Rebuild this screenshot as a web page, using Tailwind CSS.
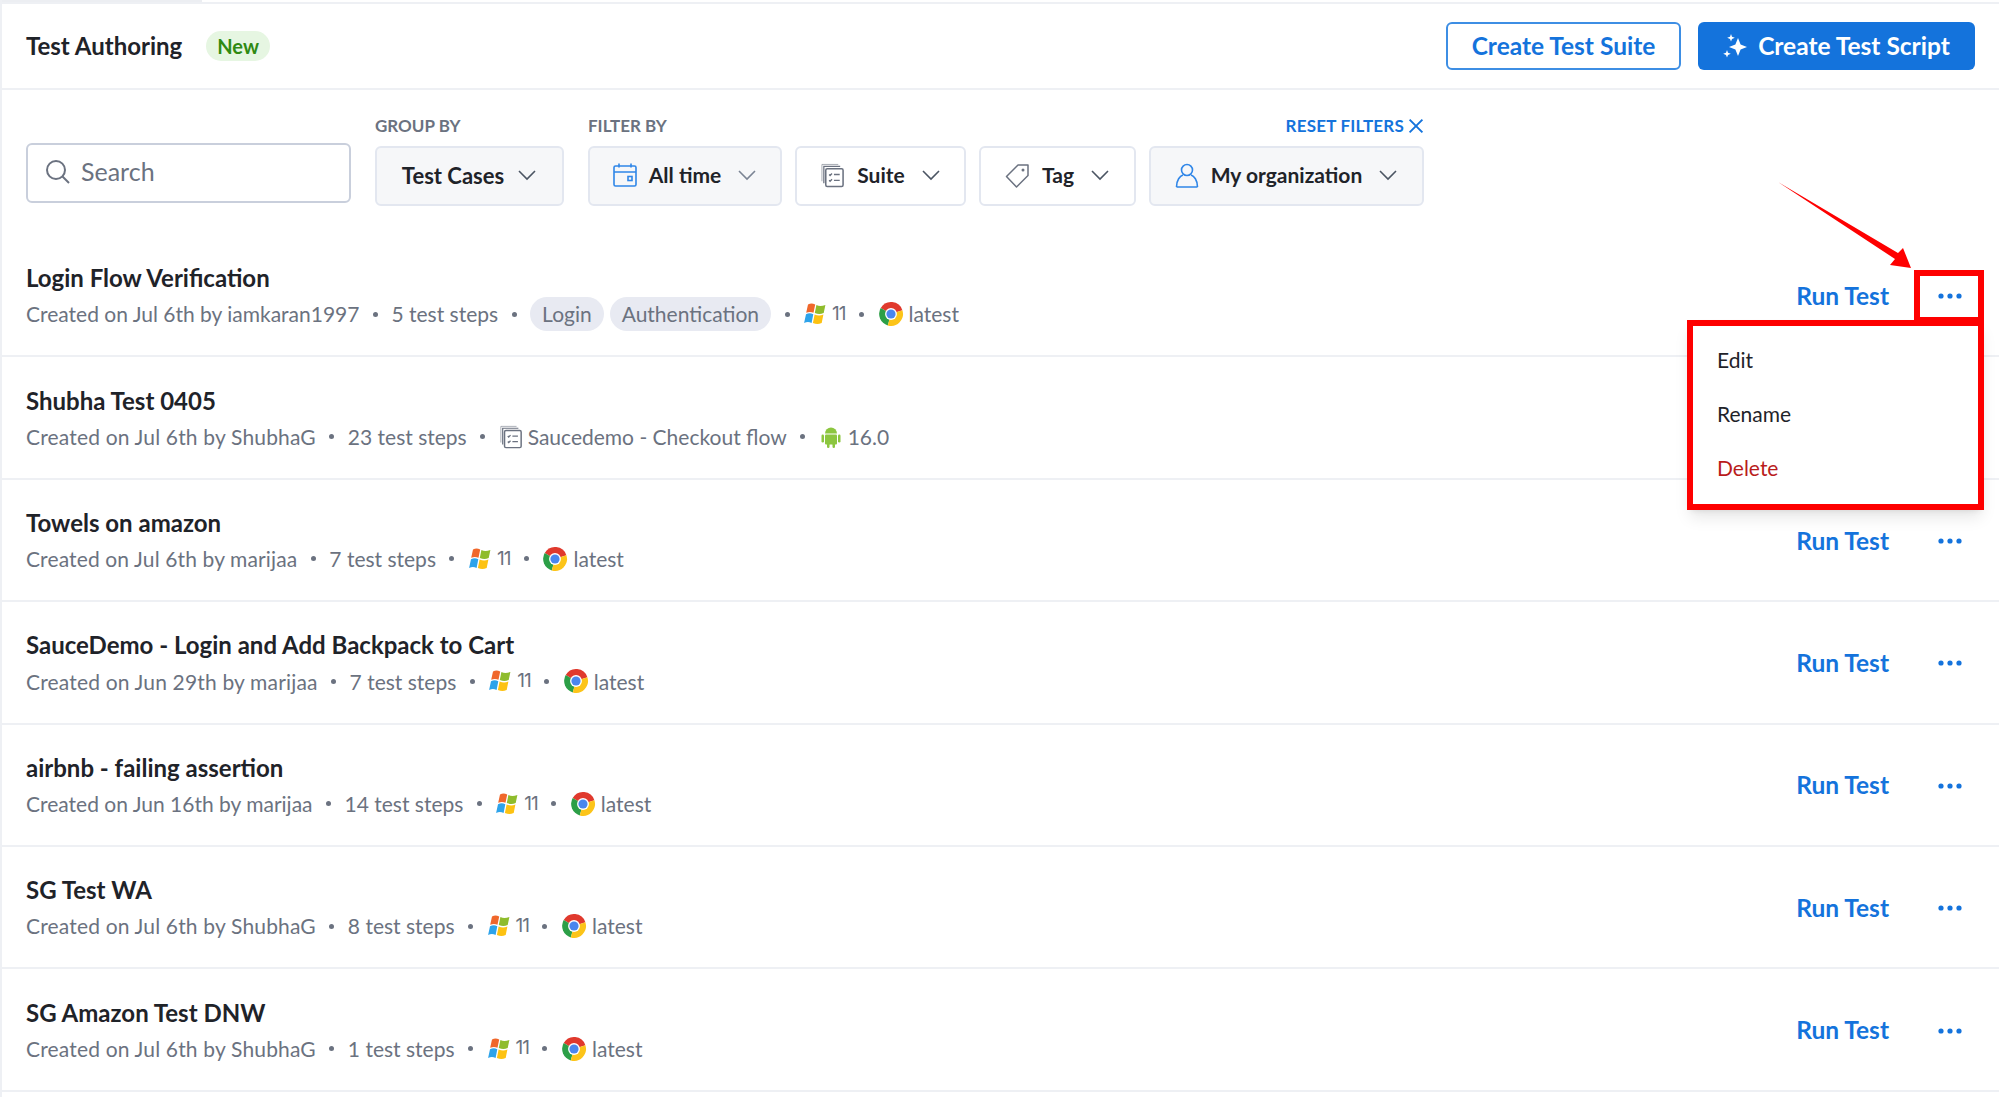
<!DOCTYPE html>
<html lang="en">
<head>
    <meta charset="UTF-8">
    <title>Test Authoring</title>
    <script src="https://cdn.jsdelivr.net/npm/@tailwindcss/browser@4"></script>
</head>
<body class="bg-white text-[#1f2329] font-['Lato',sans-serif] overflow-hidden">
    <!-- shared icons -->
    <svg class="hidden">
        <symbol id="chev" viewBox="0 0 20 12"><path d="M2 2l8 8 8-8" fill="none" stroke="currentColor" stroke-width="1.6"/></symbol>
        <symbol id="suite" viewBox="0 0 26 26" fill="none" stroke="currentColor">
            <path d="M4 21V3.500h17" stroke-width="1.300"/><path d="M2 19V1.500h17" stroke-width="1" opacity=".6"/>
            <rect x="6" y="6" width="18" height="18.500" rx="1.500" stroke-width="1.600"/>
            <path d="M9.500 12l1 1 2-2M9.500 18l1 1 2-2M14.500 12h6M14.500 18h6" stroke-width="1.400"/>
        </symbol>
        <symbol id="win" viewBox="0 0 24 24">
            <path d="M5 2.500c2.500-1.300 4.500-1.300 7.200 0l-1.700 8.300c-2.500-1.200-4.700-1.200-7.300 0z" fill="#f0672b"/>
            <path d="M13.400 3c2.700 1.300 5.300 1.200 9 0l-1.700 8c-3 1.200-5.600 1.200-8.900 0z" fill="#8fbc2c"/>
            <path d="M3 12.200c2.600-1.200 4.800-1.200 7.300 0L8.600 21c-2.600-1.300-4.800-1.300-7.500 0z" fill="#2ea3ea"/>
            <path d="M11.600 12.600c3.200 1.200 5.800 1.200 8.800 0L18.700 21c-3 1.300-5.600 1.300-8.800 0z" fill="#fdc212"/>
        </symbol>
        <symbol id="chrome" viewBox="0 0 48 48">
            <path d="M24 24L5 13A22 22 0 0 1 45 17z" fill="#e0392d"/>
            <path d="M24 24L5 13A22 22 0 0 0 18 45z" fill="#2c9f47"/>
            <path d="M24 24L45 17A22 22 0 0 1 18 45z" fill="#fcc419"/>
            <circle cx="24" cy="24" r="11" fill="#fff"/><circle cx="24" cy="24" r="8.500" fill="#4a86ee"/>
        </symbol>
        <symbol id="dots" viewBox="0 0 24 6"><circle cx="3" cy="3" r="2.600"/><circle cx="12" cy="3" r="2.600"/><circle cx="21" cy="3" r="2.600"/></symbol>
    </svg>

    <main class="w-[1999px] h-[1097px] border-l-2 border-[#eef0f4] relative">
        <!-- top strip -->
        <div class="h-[4px] border-b-2 border-[#eef0f4]"><div class="w-[200px] h-[2px] bg-[#eceef2]"></div></div>

        <!-- Header -->
        <header class="h-[86px] border-b-2 border-[#eef0f4] flex items-center justify-between pl-6 pr-6">
            <div class="flex items-center gap-6">
                <h1 class="text-[24px] font-bold">Test Authoring</h1>
                <span class="h-[30px] px-[11px] rounded-full bg-[#e6f6e2] text-[#2f8a12] text-[20px] font-bold flex items-center">New</span>
            </div>
            <div class="flex items-center gap-[17px]">
                <button class="w-[235px] h-[48px] border-2 border-[#3d8ee4] rounded-md text-[#1473dc] text-[24.500px] font-bold">Create Test Suite</button>
                <button class="w-[277px] h-[48px] bg-[#1473dc] rounded-md text-white text-[24.500px] font-bold flex items-center justify-center gap-[10px]">
                    <svg class="w-[25px] h-[25px]" viewBox="0 0 25 25" fill="#fff"><path d="M15 4l2.600 6.400L24 13l-6.400 2.600L15 22l-2.600-6.400L6 13l6.400-2.600z"/><path d="M8 0l1 2.800 2.800 1L9 4.900 8 7.600 7 4.900 4.200 3.800 7 2.800z"/><path d="M4 16l1 2.800 2.800 1L5 20.900 4 23.600 3 20.900.2 19.800 3 18.800z"/></svg>
                    Create Test Script
                </button>
            </div>
        </header>

        <!-- Filters -->
        <section class="h-[145px] pl-6 pt-[20px] flex items-end pb-[29px] gap-6">
            <label class="w-[325px] h-[60px] mb-[3px] pb-[2px] border-2 border-[#c9cfdc] rounded-md flex items-center gap-[10px] pl-[17px] text-[#6b7280] text-[25px]">
                <svg class="w-[26px] h-[26px]" viewBox="0 0 26 26" fill="none" stroke="currentColor" stroke-width="2"><circle cx="11" cy="11" r="9"/><path d="M17.500 17.500L24 24"/></svg>
                Search
            </label>
            <div>
                <div class="text-[17px] font-bold text-[#6b7280] mb-[10px] h-[20px] leading-[20px]">GROUP BY</div>
                <button class="w-[189px] h-[60px] pb-[2px] border-2 border-[#e3e7f0] bg-[#f6f7f9] rounded-md flex items-center justify-center gap-[13px] text-[22px] font-bold">
                    Test Cases
                    <svg class="w-[20px] h-[12px] text-[#4b5563]"><use href="#chev"/></svg>
                </button>
            </div>
            <div>
                <div class="flex justify-between items-center mb-[10px] h-[20px]">
                    <span class="text-[17px] font-bold text-[#6b7280] leading-[20px]">FILTER BY</span>
                    <span class="text-[17px] tracking-[0.2px] font-bold text-[#1473dc] flex items-center gap-[4px] leading-[20px]">RESET FILTERS
                        <svg class="w-[16px] h-[16px]" viewBox="0 0 15 15" fill="none" stroke="currentColor" stroke-width="1.800"><path d="M1.500 1.500l12 12M13.500 1.500l-12 12"/></svg>
                    </span>
                </div>
                <div class="flex gap-[13px]">
                    <button class="w-[194px] h-[60px] pb-[2px] border-2 border-[#e3e7f0] bg-[#f6f7f9] rounded-md flex items-center justify-center gap-[12px] text-[21px] font-bold">
                        <svg class="w-[24px] h-[24px] text-[#2f86e8]" viewBox="0 0 24 24" fill="none" stroke="currentColor" stroke-width="1.600"><rect x="1" y="3" width="22" height="20" rx="1.500"/><path d="M1 9h22M6 0.500v4M18 0.500v4"/><rect x="15" y="13.500" width="4" height="4"/></svg>
                        All time
                        <svg class="w-[20px] h-[12px] text-[#7b8494] ml-1"><use href="#chev"/></svg>
                    </button>
                    <button class="w-[171px] h-[60px] pb-[2px] border-2 border-[#e3e7f0] rounded-md flex items-center justify-center gap-[12px] text-[21px] font-bold">
                        <svg class="w-[25px] h-[25px] text-[#6b7280]"><use href="#suite"/></svg>
                        Suite
                        <svg class="w-[20px] h-[12px] text-[#4b5563] ml-1"><use href="#chev"/></svg>
                    </button>
                    <button class="w-[157px] h-[60px] pb-[2px] border-2 border-[#e3e7f0] rounded-md flex items-center justify-center gap-[12px] text-[21px] font-bold">
                        <svg class="w-[25px] h-[25px] text-[#6b7280]" viewBox="0 0 25 25" fill="none" stroke="currentColor" stroke-width="1.500"><path d="M1.500 13.500L13 2h10v10.500L11.500 24z" stroke-linejoin="round"/><circle cx="18" cy="7" r="1.500" fill="currentColor" stroke="none"/></svg>
                        Tag
                        <svg class="w-[20px] h-[12px] text-[#4b5563] ml-1"><use href="#chev"/></svg>
                    </button>
                    <button class="w-[275px] h-[60px] pb-[2px] border-2 border-[#e3e7f0] bg-[#f6f7f9] rounded-md flex items-center justify-center gap-[12px] text-[21px] font-bold">
                        <svg class="w-[24px] h-[25px] text-[#2f86e8]" viewBox="0 0 24 25" fill="none" stroke="currentColor" stroke-width="1.600"><circle cx="12" cy="7" r="5.500"/><path d="M1.500 24c0-7 3.500-11 6.500-12M22.500 24c0-7-3.500-11-6.500-12M1.500 24h21"/></svg>
                        My organization
                        <svg class="w-[20px] h-[12px] text-[#4b5563] ml-1"><use href="#chev"/></svg>
                    </button>
                </div>
            </div>
        </section>

        <!-- Test list -->
        <ul>
            <li class="h-[122.400px] pt-[2px] border-b-2 border-[#eef0f4] flex items-center justify-between pl-6 pr-[37px]">
                <div>
                    <h2 class="text-[24px] font-bold leading-7 pt-[2px] mb-[6px]">Login Flow Verification</h2>
                    <div class="flex items-center gap-[13.500px] text-[21px] text-[#6b7280] h-8">
                        <span>Created on Jul 6th by iamkaran1997</span><i class="w-[5px] h-[5px] rounded-full bg-[#6b7280]"></i>
                        <span>5 test steps</span><i class="w-[5px] h-[5px] rounded-full bg-[#6b7280]"></i>
                        <span class="flex gap-[6px]"><b class="font-normal bg-[#e8eaf2] rounded-full px-3 h-[34px] leading-[34px]">Login</b><b class="font-normal bg-[#e8eaf2] rounded-full px-3 h-[34px] leading-[34px]">Authentication</b></span><i class="w-[5px] h-[5px] rounded-full bg-[#6b7280]"></i>
                        <span class="flex items-center gap-[5px]"><svg class="w-6 h-6"><use href="#win"/></svg><span class="font-['Inter'] text-[19px] tracking-[-1px]">11</span></span><i class="w-[5px] h-[5px] rounded-full bg-[#6b7280]"></i>
                        <span class="flex items-center gap-[5px]"><svg class="w-[26px] h-[26px]"><use href="#chrome"/></svg>latest</span>
                    </div>
                </div>
                <div class="flex items-center gap-[49px] text-[#1473dc]">
                    <span class="text-[24.500px] font-bold">Run Test</span>
                    <svg class="w-[24px] h-[6px] fill-current"><use href="#dots"/></svg>
                </div>
            </li>
            <li class="h-[122.400px] pt-[2px] border-b-2 border-[#eef0f4] flex items-center justify-between pl-6 pr-[37px]">
                <div>
                    <h2 class="text-[24px] font-bold leading-7 pt-[2px] mb-[6px]">Shubha Test 0405</h2>
                    <div class="flex items-center gap-[13.500px] text-[21px] text-[#6b7280] h-8">
                        <span class="tracking-[0.17px]">Created on Jul 6th by ShubhaG</span><i class="w-[5px] h-[5px] rounded-full bg-[#6b7280]"></i>
                        <span>23 test steps</span><i class="w-[5px] h-[5px] rounded-full bg-[#6b7280]"></i>
                        <span class="flex items-center gap-[5px]"><svg class="w-6 h-6"><use href="#suite"/></svg>Saucedemo - Checkout flow</span><i class="w-[5px] h-[5px] rounded-full bg-[#6b7280]"></i>
                        <span class="flex items-center gap-[5px]">
                            <svg class="w-6 h-6" viewBox="0 0 24 24" fill="#8cc63f"><path d="M6 8.500a6 6 0 0 1 12 0z"/><rect x="6" y="9.500" width="12" height="10" rx="1"/><rect x="2.500" y="9.500" width="2.500" height="8" rx="1.200"/><rect x="19" y="9.500" width="2.500" height="8" rx="1.200"/><rect x="8" y="18" width="2.500" height="5" rx="1.200"/><rect x="13.500" y="18" width="2.500" height="5" rx="1.200"/></svg>
                            16.0</span>
                    </div>
                </div>
            </li>
            <li class="h-[122.400px] pt-[2px] border-b-2 border-[#eef0f4] flex items-center justify-between pl-6 pr-[37px]">
                <div>
                    <h2 class="text-[24px] font-bold leading-7 pt-[2px] mb-[6px]">Towels on amazon</h2>
                    <div class="flex items-center gap-[13.500px] text-[21px] text-[#6b7280] h-8">
                        <span class="tracking-[0.13px]">Created on Jul 6th by marijaa</span><i class="w-[5px] h-[5px] rounded-full bg-[#6b7280]"></i>
                        <span>7 test steps</span><i class="w-[5px] h-[5px] rounded-full bg-[#6b7280]"></i>
                        <span class="flex items-center gap-[5px]"><svg class="w-6 h-6"><use href="#win"/></svg><span class="font-['Inter'] text-[19px] tracking-[-1px]">11</span></span><i class="w-[5px] h-[5px] rounded-full bg-[#6b7280]"></i>
                        <span class="flex items-center gap-[5px]"><svg class="w-[26px] h-[26px]"><use href="#chrome"/></svg>latest</span>
                    </div>
                </div>
                <div class="flex items-center gap-[49px] text-[#1473dc]">
                    <span class="text-[24.500px] font-bold">Run Test</span>
                    <svg class="w-[24px] h-[6px] fill-current"><use href="#dots"/></svg>
                </div>
            </li>
            <li class="h-[122.400px] pt-[2px] border-b-2 border-[#eef0f4] flex items-center justify-between pl-6 pr-[37px]">
                <div>
                    <h2 class="text-[24px] font-bold leading-7 pt-[2px] mb-[6px]">SauceDemo - Login and Add Backpack to Cart</h2>
                    <div class="flex items-center gap-[13.500px] text-[21px] text-[#6b7280] h-8">
                        <span class="tracking-[0.17px]">Created on Jun 29th by marijaa</span><i class="w-[5px] h-[5px] rounded-full bg-[#6b7280]"></i>
                        <span>7 test steps</span><i class="w-[5px] h-[5px] rounded-full bg-[#6b7280]"></i>
                        <span class="flex items-center gap-[5px]"><svg class="w-6 h-6"><use href="#win"/></svg><span class="font-['Inter'] text-[19px] tracking-[-1px]">11</span></span><i class="w-[5px] h-[5px] rounded-full bg-[#6b7280]"></i>
                        <span class="flex items-center gap-[5px]"><svg class="w-[26px] h-[26px]"><use href="#chrome"/></svg>latest</span>
                    </div>
                </div>
                <div class="flex items-center gap-[49px] text-[#1473dc]">
                    <span class="text-[24.500px] font-bold">Run Test</span>
                    <svg class="w-[24px] h-[6px] fill-current"><use href="#dots"/></svg>
                </div>
            </li>
            <li class="h-[122.400px] pt-[2px] border-b-2 border-[#eef0f4] flex items-center justify-between pl-6 pr-[37px]">
                <div>
                    <h2 class="text-[24px] font-bold leading-7 pt-[2px] mb-[6px]">airbnb - failing assertion</h2>
                    <div class="flex items-center gap-[13.500px] text-[21px] text-[#6b7280] h-8">
                        <span>Created on Jun 16th by marijaa</span><i class="w-[5px] h-[5px] rounded-full bg-[#6b7280]"></i>
                        <span>14 test steps</span><i class="w-[5px] h-[5px] rounded-full bg-[#6b7280]"></i>
                        <span class="flex items-center gap-[5px]"><svg class="w-6 h-6"><use href="#win"/></svg><span class="font-['Inter'] text-[19px] tracking-[-1px]">11</span></span><i class="w-[5px] h-[5px] rounded-full bg-[#6b7280]"></i>
                        <span class="flex items-center gap-[5px]"><svg class="w-[26px] h-[26px]"><use href="#chrome"/></svg>latest</span>
                    </div>
                </div>
                <div class="flex items-center gap-[49px] text-[#1473dc]">
                    <span class="text-[24.500px] font-bold">Run Test</span>
                    <svg class="w-[24px] h-[6px] fill-current"><use href="#dots"/></svg>
                </div>
            </li>
            <li class="h-[122.400px] pt-[2px] border-b-2 border-[#eef0f4] flex items-center justify-between pl-6 pr-[37px]">
                <div>
                    <h2 class="text-[24px] font-bold leading-7 pt-[2px] mb-[6px]">SG Test WA</h2>
                    <div class="flex items-center gap-[13.500px] text-[21px] text-[#6b7280] h-8">
                        <span class="tracking-[0.17px]">Created on Jul 6th by ShubhaG</span><i class="w-[5px] h-[5px] rounded-full bg-[#6b7280]"></i>
                        <span>8 test steps</span><i class="w-[5px] h-[5px] rounded-full bg-[#6b7280]"></i>
                        <span class="flex items-center gap-[5px]"><svg class="w-6 h-6"><use href="#win"/></svg><span class="font-['Inter'] text-[19px] tracking-[-1px]">11</span></span><i class="w-[5px] h-[5px] rounded-full bg-[#6b7280]"></i>
                        <span class="flex items-center gap-[5px]"><svg class="w-[26px] h-[26px]"><use href="#chrome"/></svg>latest</span>
                    </div>
                </div>
                <div class="flex items-center gap-[49px] text-[#1473dc]">
                    <span class="text-[24.500px] font-bold">Run Test</span>
                    <svg class="w-[24px] h-[6px] fill-current"><use href="#dots"/></svg>
                </div>
            </li>
            <li class="h-[122.400px] pt-[2px] border-b-2 border-[#eef0f4] flex items-center justify-between pl-6 pr-[37px]">
                <div>
                    <h2 class="text-[24px] font-bold leading-7 pt-[2px] mb-[6px]">SG Amazon Test DNW</h2>
                    <div class="flex items-center gap-[13.500px] text-[21px] text-[#6b7280] h-8">
                        <span class="tracking-[0.17px]">Created on Jul 6th by ShubhaG</span><i class="w-[5px] h-[5px] rounded-full bg-[#6b7280]"></i>
                        <span>1 test steps</span><i class="w-[5px] h-[5px] rounded-full bg-[#6b7280]"></i>
                        <span class="flex items-center gap-[5px]"><svg class="w-6 h-6"><use href="#win"/></svg><span class="font-['Inter'] text-[19px] tracking-[-1px]">11</span></span><i class="w-[5px] h-[5px] rounded-full bg-[#6b7280]"></i>
                        <span class="flex items-center gap-[5px]"><svg class="w-[26px] h-[26px]"><use href="#chrome"/></svg>latest</span>
                    </div>
                </div>
                <div class="flex items-center gap-[49px] text-[#1473dc]">
                    <span class="text-[24.500px] font-bold">Run Test</span>
                    <svg class="w-[24px] h-[6px] fill-current"><use href="#dots"/></svg>
                </div>
            </li>
        </ul>

        <!-- Annotation overlay: arrow, red box, open menu -->
        <svg class="absolute left-[1773px] top-[180px] w-[140px] h-[92px]" viewBox="0 0 140 92" fill="#fe0000"><path d="M3 2L123 73l5-5 8 20-21-3 5-6z"/></svg>
        <div class="absolute left-[1912px] top-[270px] w-[70px] h-[53px] border-[6px] border-[#fe0000]"></div>
        <div class="absolute left-[1685px] top-[320px] w-[297px] h-[190px] border-[6px] border-[#fe0000] bg-white shadow-lg pl-[24px] pb-[2px] flex flex-col justify-center gap-[30px] text-[21px] leading-[24px]">
            <span>Edit</span>
            <span>Rename</span>
            <span class="text-[#b91c1c]">Delete</span>
        </div>
    </main>
</body>
</html>
